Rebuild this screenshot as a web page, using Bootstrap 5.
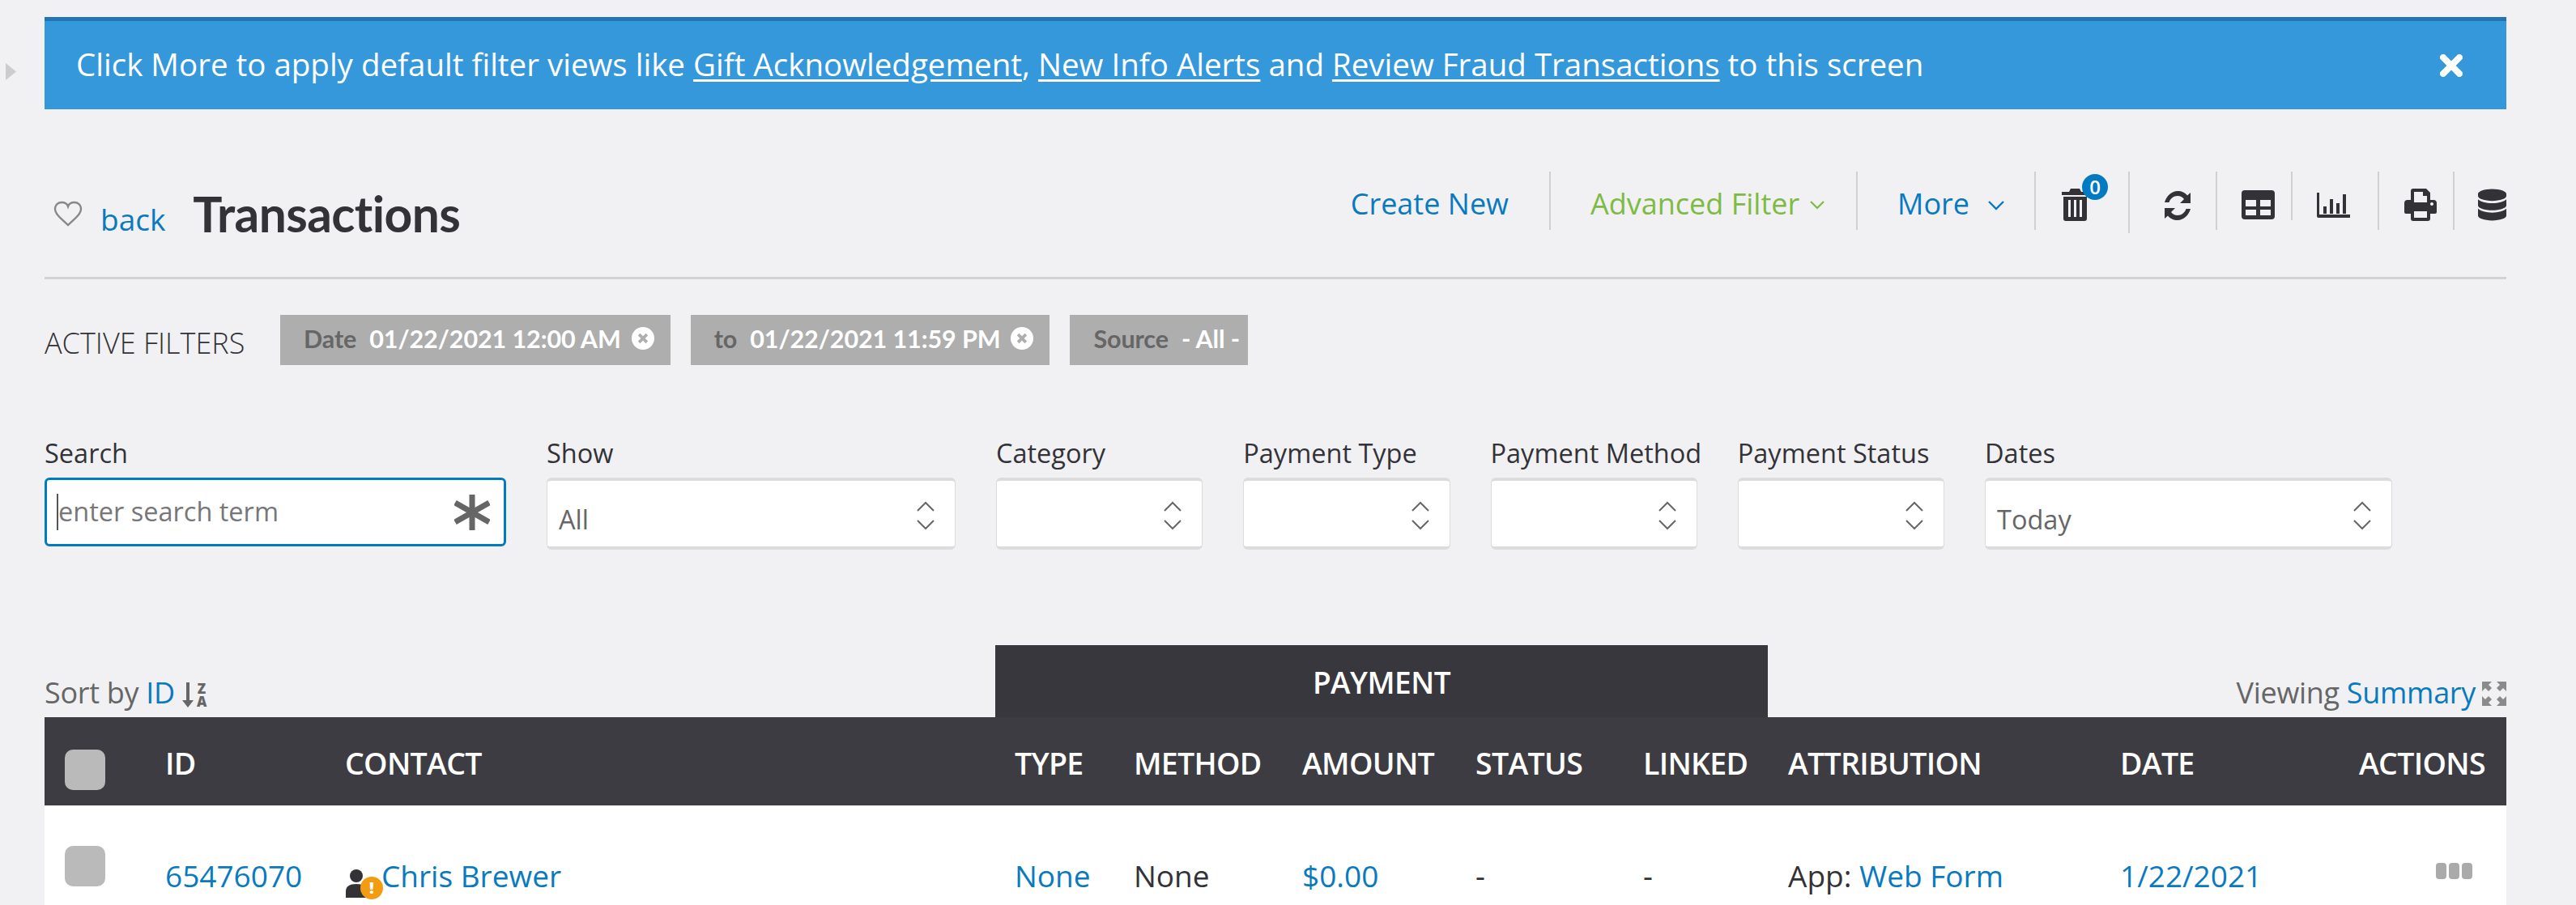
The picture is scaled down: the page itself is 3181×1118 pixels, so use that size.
<!DOCTYPE html>
<html lang="en">
<head>
<meta charset="utf-8">
<title>Transactions</title>
<link rel="stylesheet" href="https://cdn.jsdelivr.net/npm/bootstrap@5.3.0/dist/css/bootstrap.min.css">
<style>
html,body{height:1118px;overflow:hidden}
body{background:#f1f1f4;font-family:"Open Sans","Liberation Sans",sans-serif;font-size:36px;color:#333237}
a{color:#0a7abf;text-decoration:none}
.gutter{width:55px;flex:none}
.handle{display:block;margin:78px 0 0 7px}
.mainpane{width:3040px;flex:none}
.info-bar{margin:21px 0 0;height:114px;padding:0 0 0 39px;background:#3498db;border:0;border-top:5px solid #2274b5;border-radius:0;color:#fff;font-size:38.5px;line-height:50px;display:flex;align-items:center;justify-content:space-between}
.info-bar span{padding-bottom:4px}
.info-bar a{color:#fff;text-decoration:underline;text-underline-offset:4px}
.close-x{background:none;border:0;padding:0 54px 0 0;line-height:0}
.head-row{margin-top:77px;height:133px;border-bottom:3px solid #d2d2d4}
.back-block{padding:32px 0 0 11px;gap:20px}
.heart{margin-top:4px}
.back-lnk{font-size:37px;line-height:50px;margin-top:2px;margin-left:2px}
.page-title{font-family:Lato,"Open Sans",sans-serif;font-weight:700;font-size:60.5px;line-height:60px;margin:-10px 0 0 14px;color:#333237;letter-spacing:-.6px}
.tools{height:76px}
.tool{height:72px;border-left:2px solid #d0d0d2;display:flex;align-items:flex-start;position:relative;line-height:1}
.tool-txt{padding-top:16px;font-size:36px;line-height:48px;white-space:nowrap}
.create{padding:16px 50px 0 0;font-size:36px;line-height:48px}
.t-adv{width:379px;padding-left:49px;color:#7dbb42}
.t-more{width:220px;padding-left:49px}
.t-trash{width:116px;padding:21px 0 0 32px}
.t-refresh{width:108px;padding:24px 0 0 41px;height:76px}
.t-table{width:93px;padding:23px 0 0 30px}
.t-chart{width:107px;padding:26px 0 0 30px;height:60px}
.t-print{width:93px;padding:21px 0 0 31px}
.t-db{width:66px;padding:21px 0 0 29px}
.chev{margin-left:23px;margin-top:20px}
.t-adv .chev{margin-left:13px}
.count{position:absolute;left:57px;top:3px;width:32px;height:32px;border-radius:50%;background:#007bc2;color:#fff;font-size:24px;line-height:32px;padding:0;font-weight:600}
.filter-row{margin-top:44px;height:62px}
.filter-ttl{font-size:36px;width:291px;line-height:62px;padding-top:4px;font-weight:300;color:#333237}
.chip{font-family:Lato,"Open Sans",sans-serif;background:#aeaeae;border-radius:0;height:62px;font-size:30.5px;font-weight:700;color:#fff;padding:0 20px 4px 29px;margin-right:25px;display:flex;align-items:center;letter-spacing:-.1px}
.chip b{color:#666;margin-right:16px;font-weight:700}
.chip svg{margin-left:13px}
.chip-last{padding-right:10px;margin-right:0}
.fields{margin-top:89px;gap:50px}
.fld-search{width:570px}.fld-show{width:505px}.fld-sm{width:255.25px}.fld-dates{width:503px}
.fld-lbl{font-size:32.5px;line-height:40px;margin:0 0 10px;white-space:nowrap}
.searchbox{height:85px;background:#fff;border:3px solid #007bc2;border-radius:6px;padding:0 17px 0 12px}
.cursor{width:2px;height:45px;background:#555;flex:none}
.searchbox .form-control{border:0;box-shadow:none;background:transparent;padding:0;font-size:32.5px;line-height:44px;color:#666;border-radius:0;height:44px;margin-top:-2px}
.searchbox .form-control::placeholder{color:#777;opacity:1}
.pick.form-select{height:89px;border:1px solid #dcdcdc;border-top:4px solid #dcdcdc;border-bottom:4px solid #dcdcdc;border-radius:6px;font-size:32.5px;line-height:44px;color:#666;padding:14px 60px 0 14px;box-shadow:none;background-color:#fff;background-size:24px 38px;background-position:right 24px top 24px;background-image:url("data:image/svg+xml,%3Csvg xmlns='http://www.w3.org/2000/svg' viewBox='0 0 24 38'%3E%3Cpath d='M2 13 12 3l10 10M2 25l10 10 10-10' fill='none' stroke='%23666' stroke-width='2'/%3E%3C/svg%3E")}
.sort-row{margin-top:118px;height:89px}
.sort-lbl{width:1174px;font-size:36px;line-height:46px;color:#666;padding-bottom:7px;letter-spacing:-.3px}
.sort-ic{vertical-align:-6px;margin-left:9px;gap:4px}
.sort-az{font-size:17px;line-height:16px;font-weight:800;color:#666;letter-spacing:0;text-align:center}
.tabhead{width:954px;height:89px;background:#38373d;color:#fff;font-weight:600;font-size:37px;text-align:center;line-height:92px;letter-spacing:-.5px}
.view-lbl{flex:1;text-align:right;font-size:36px;line-height:46px;color:#666;padding-bottom:7px;white-space:nowrap;letter-spacing:-.3px}
.view-lbl svg{vertical-align:-3px;margin-left:8px}
.grid-tbl{table-layout:fixed;width:3040px;margin:0;--bs-table-bg:transparent}
.c0{width:149px}.c1{width:222px}.c2{width:827px}.c3{width:147px}.c4{width:208px}.c5{width:214px}.c6{width:207px}.c7{width:179px}.c8{width:410px}.c9{width:295px}.c10{width:182px}
.grid-tbl th{background:#3d3c42;color:#fff;font-weight:600;font-size:37.5px;line-height:46px;height:109px;padding:4px 0 0;border:0;vertical-align:middle;white-space:nowrap;letter-spacing:-.7px}
.grid-tbl td{background:#fff;font-size:37px;line-height:48px;color:#333237;height:123px;padding:63px 0 0;border:0;vertical-align:top;white-space:nowrap}
.grid-tbl th.c-box{padding:20px 0 0 25px}
.grid-tbl td.c-box{padding:50px 0 0 25px}
.tick{display:block;width:50px;height:50px;border-radius:10px;background:#bababa}
.who{position:relative;display:inline-block;width:45px;height:46px;vertical-align:-7px}
.warn{position:absolute;left:19px;top:18px;width:28px;height:28px;border-radius:50%;background:#f39c12;color:#fff;font-size:20px;line-height:28px;text-align:center;font-weight:800}
.dots{display:flex;gap:3px;padding:8px 0 0 95px}
.dots i{display:block;width:13px;height:20px;border-radius:4px;background:#aaa}
</style>
</head>
<body>
<div class="d-flex">
  <div class="gutter"><svg class="handle" width="13" height="21" viewBox="0 0 13 21"><path d="M0 0 13 10.500 0 21z" fill="#ccc"/></svg></div>
  <main class="mainpane">
    <div class="alert info-bar" role="alert">
      <span>Click More to apply default filter views like <a href="#">Gift Acknowledgement</a>, <a href="#">New Info Alerts</a> and <a href="#">Review Fraud Transactions</a> to this screen</span>
      <button class="close-x" type="button" aria-label="Close"><svg width="28" height="28" viewBox="0 0 28 28"><path d="M4 4 24 24M24 4 4 24" stroke="#fff" stroke-width="8" stroke-linecap="round"/></svg></button>
    </div>

    <div class="head-row d-flex justify-content-between align-items-start">
      <div class="back-block d-flex align-items-start">
        <svg class="heart" width="36" height="32" viewBox="0 0 36 32"><path d="M18 30C8 21 2 16 2 10c0-5 4-8 8-8 4 0 7 2 8 5 1-3 4-5 8-5 4 0 8 3 8 8 0 6-6 11-16 20z" fill="none" stroke="#888" stroke-width="2.400"/></svg>
        <a class="back-lnk" href="#">back</a>
        <h1 class="page-title">Transactions</h1>
      </div>
      <div class="tools d-flex align-items-start">
        <a class="create" href="#">Create New</a>
        <a class="tool tool-txt t-adv" href="#">Advanced Filter<svg class="chev" width="18" height="11" viewBox="0 0 18 11"><path d="M1 1l8 8 8-8" fill="none" stroke="#7dbb42" stroke-width="2.200"/></svg></a>
        <a class="tool tool-txt t-more" href="#">More<svg class="chev" width="20" height="12" viewBox="0 0 20 12"><path d="M1 1l9 9 9-9" fill="none" stroke="#0a7abf" stroke-width="2.400"/></svg></a>
        <div class="tool t-trash">
          <svg width="33" height="40" viewBox="0 0 33 40"><path fill="#333237" fill-rule="evenodd" d="M11 0h11l2 4h9v4H0V4h9zM2 10h29v27a3 3 0 0 1-3 3H5a3 3 0 0 1-3-3zm6 4v21h3V14zm7 0v21h3V14zm7 0v21h3V14z"/></svg>
          <span class="badge count">0</span>
        </div>
        <div class="tool t-refresh">
          <svg width="36" height="36" viewBox="0 0 36 36"><path fill="#333237" d="M34 2v13H21l5-5C24 7.500 21.500 6 18 6 13 6 9 9.500 7.500 14H2C4 6.500 10.300 0 18 0c5 0 9.500 2 12 5.500zM2 34V21h13l-5 5c2 2.500 4.500 4 8 4 5 0 9-3.500 10.500-8H34c-2 7.500-8.300 14-16 14-5 0-9.500-2-12-5.500z"/></svg>
        </div>
        <div class="tool t-table">
          <svg width="41" height="36" viewBox="0 0 41 36"><path fill="#333237" fill-rule="evenodd" d="M4 0h33a4 4 0 0 1 4 4v28a4 4 0 0 1-4 4H4a4 4 0 0 1-4-4V4a4 4 0 0 1 4-4zm1 12v8h13v-8zm18 0v8h13v-8zM5 24v7h13v-7zm18 0v7h13v-7z"/></svg>
        </div>
        <div class="tool t-chart">
          <svg width="41" height="32" viewBox="0 0 41 32"><path fill="#333237" d="M0 0h3v27h38v4H2a2 2 0 0 1-2-2zM8 17h4v9H8zm8-9h4v18h-4zm8 5h4v13h-4zm8-11h4v24h-4z"/></svg>
        </div>
        <div class="tool t-print">
          <svg width="40" height="40" viewBox="0 0 40 40"><path fill="#333237" fill-rule="evenodd" d="M8 3a3 3 0 0 1 3-3h16l5 5v9h4a4 4 0 0 1 4 4v11a2 2 0 0 1-2 2h-6v6a3 3 0 0 1-3 3H11a3 3 0 0 1-3-3v-6H2a2 2 0 0 1-2-2V18a4 4 0 0 1 4-4h4zm4 1v13h16V9h-5V4zm0 24v8h16v-8zm22-11a2 2 0 1 0 .01 0z"/></svg>
        </div>
        <div class="tool t-db">
          <svg width="36" height="40" viewBox="0 0 36 40"><path fill="#333237" d="M18 0c10 0 18 3 18 6v3c0 3-8 6-18 6S0 12 0 9V6c0-3 8-6 18-6zM0 13c3 3 10 5 18 5s15-2 18-5v8c0 3-8 6-18 6S0 24 0 21zM0 25c3 3 10 5 18 5s15-2 18-5v9c0 3-8 6-18 6S0 37 0 34z"/></svg>
        </div>
      </div>
    </div>

    <div class="filter-row d-flex align-items-start">
      <div class="filter-ttl">ACTIVE FILTERS</div>
      <span class="badge chip"><b>Date</b>01/22/2021 12:00 AM<svg width="28" height="28" viewBox="0 0 26 26"><circle cx="13" cy="13" r="13" fill="#fff"/><path d="M8.500 8.500l9 9m0-9l-9 9" stroke="#aeaeae" stroke-width="3.500"/></svg></span>
      <span class="badge chip"><b>to</b>01/22/2021 11:59 PM<svg width="28" height="28" viewBox="0 0 26 26"><circle cx="13" cy="13" r="13" fill="#fff"/><path d="M8.500 8.500l9 9m0-9l-9 9" stroke="#aeaeae" stroke-width="3.500"/></svg></span>
      <span class="badge chip chip-last"><b>Source</b>- All -</span>
    </div>

    <div class="fields d-flex align-items-start">
      <div class="fld-search">
        <label class="fld-lbl d-block">Search</label>
        <div class="searchbox d-flex align-items-center">
          <span class="cursor"></span>
          <input class="form-control" type="text" placeholder="enter search term">
          <svg class="flex-shrink-0" width="44" height="44" viewBox="0 0 44 44"><path d="M22 0v44M1 10l42 24M43 10 1 34" stroke="#666" stroke-width="7"/></svg>
        </div>
      </div>
      <div class="fld-show"><label class="fld-lbl d-block">Show</label><select class="form-select pick"><option>All</option></select></div>
      <div class="fld-sm"><label class="fld-lbl d-block">Category</label><select class="form-select pick"><option></option></select></div>
      <div class="fld-sm"><label class="fld-lbl d-block">Payment Type</label><select class="form-select pick"><option></option></select></div>
      <div class="fld-sm"><label class="fld-lbl d-block">Payment Method</label><select class="form-select pick"><option></option></select></div>
      <div class="fld-sm"><label class="fld-lbl d-block">Payment Status</label><select class="form-select pick"><option></option></select></div>
      <div class="fld-dates"><label class="fld-lbl d-block">Dates</label><select class="form-select pick"><option>Today</option></select></div>
    </div>

    <div class="sort-row d-flex align-items-end">
      <div class="sort-lbl">Sort by <a href="#">ID</a><span class="sort-ic d-inline-flex align-items-start"><svg width="14" height="32" viewBox="0 0 14 32"><path fill="#666" d="M5 0h4v22h5l-7 9-7-9h5z"/></svg><span class="sort-az d-inline-flex flex-column"><span>Z</span><span>A</span></span></span></div>
      <div class="tabhead">PAYMENT</div>
      <div class="view-lbl">Viewing <a href="#">Summary</a><svg width="30" height="30" viewBox="0 0 30 30"><path fill="#8a8a8a" d="M0 0h12L8 4l4 4-4 4-4-4-4 4zM30 0v12l-4-4-4 4-4-4 4-4-4-4zM0 30V18l4 4 4-4 4 4-4 4 4 4zM30 30H18l4-4-4-4 4-4 4 4 4-4z"/></svg></div>
    </div>

    <table class="table grid-tbl">
      <colgroup><col class="c0"><col class="c1"><col class="c2"><col class="c3"><col class="c4"><col class="c5"><col class="c6"><col class="c7"><col class="c8"><col class="c9"><col class="c10"></colgroup>
      <thead>
        <tr><th class="c-box"><span class="tick"></span></th><th>ID</th><th>CONTACT</th><th>TYPE</th><th>METHOD</th><th>AMOUNT</th><th>STATUS</th><th>LINKED</th><th>ATTRIBUTION</th><th>DATE</th><th>ACTIONS</th></tr>
      </thead>
      <tbody>
        <tr>
          <td class="c-box"><span class="tick"></span></td>
          <td><a href="#">65476070</a></td>
          <td><span class="who"><svg width="28" height="40" viewBox="0 0 28 40"><circle cx="14" cy="9" r="8" fill="#333237"/><path d="M1 36v-8c0-6 5-9 13-9s13 3 13 9v8z" fill="#333237"/></svg><span class="warn">!</span></span><a href="#">Chris Brewer</a></td>
          <td><a href="#">None</a></td>
          <td>None</td>
          <td><a href="#">$0.00</a></td>
          <td>-</td>
          <td>-</td>
          <td>App: <a href="#">Web Form</a></td>
          <td><a href="#">1/22/2021</a></td>
          <td><div class="dots"><i></i><i></i><i></i></div></td>
        </tr>
      </tbody>
    </table>
  </main>
</div>
<script src="https://cdn.jsdelivr.net/npm/bootstrap@5.3.0/dist/js/bootstrap.bundle.min.js"></script>
</body>
</html>
